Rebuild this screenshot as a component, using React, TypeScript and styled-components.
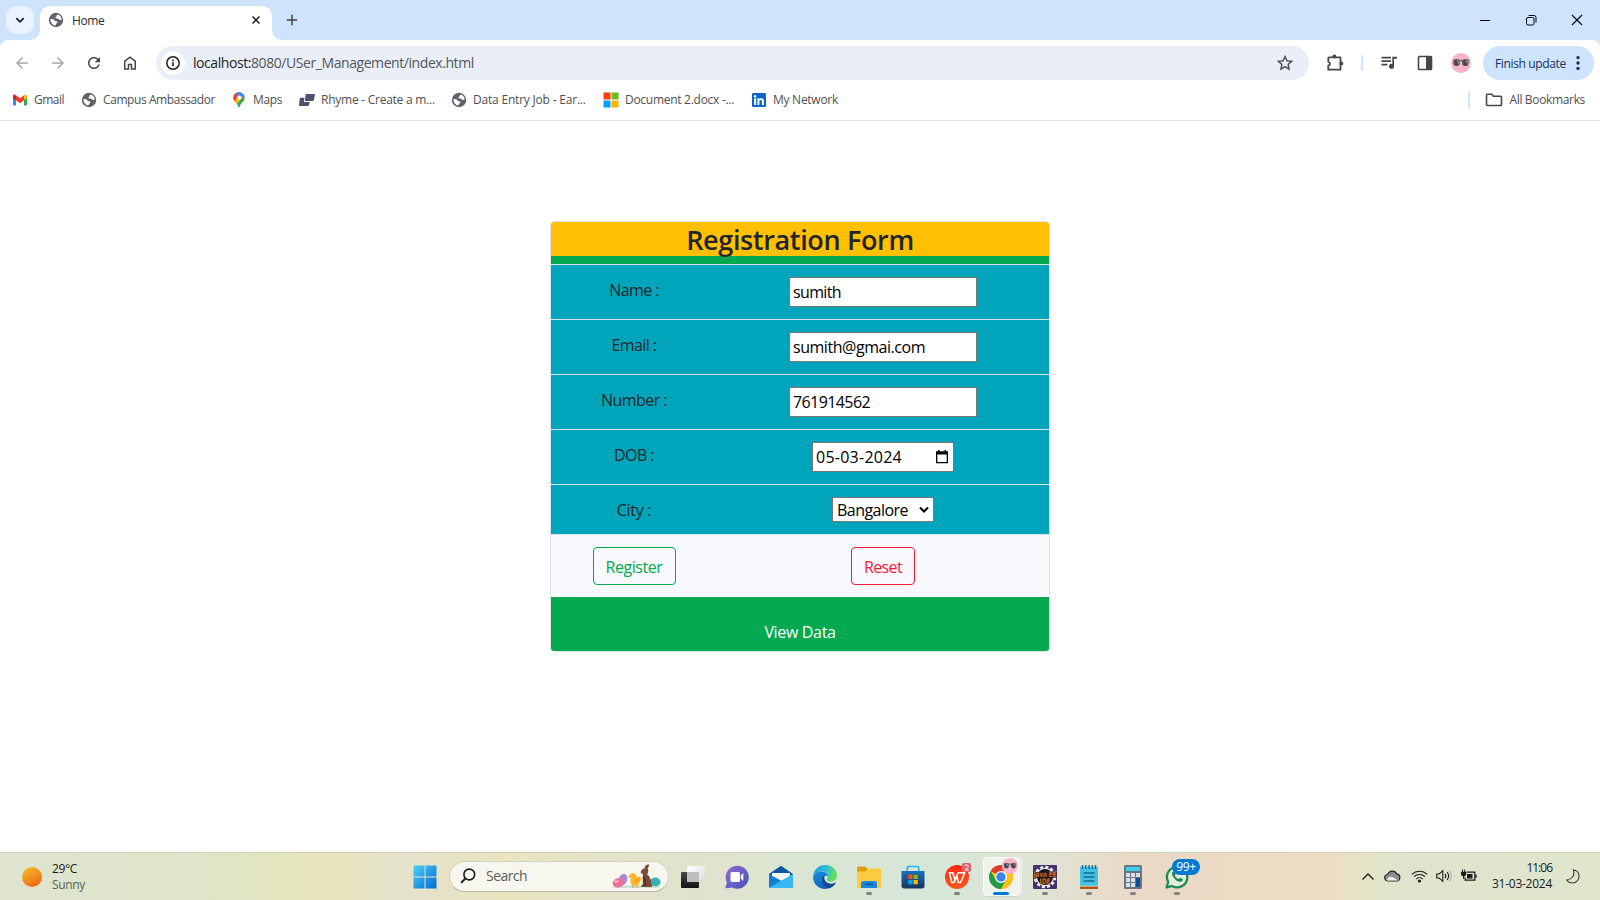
import React from 'react';
import styled, { createGlobalStyle } from 'styled-components';

const GlobalStyle = createGlobalStyle`
  * { box-sizing: border-box; }
  html, body { margin: 0; padding: 0; overflow: hidden; }
  body { font-family: "Open Sans", "Noto Sans", sans-serif; color: #212529; background: #fff; }
`;

/* ---------- shared ---------- */

const Screen = styled.div`
  width: 1600px;
  height: 900px;
  display: flex;
  flex-direction: column;
  overflow: hidden;
`;

const Label = styled.span<{ $track?: number }>`
  display: inline-block;
  white-space: nowrap;
  letter-spacing: ${(p) => p.$track ?? 0}px;
`;

const Glyph = styled.svg`
  display: block;
  flex: none;
  overflow: visible;
`;

/* ---------- tab strip ---------- */

const TabStrip = styled.header`
  height: 40px;
  flex: none;
  display: flex;
  align-items: flex-end;
  background: #cee3fc;
`;

const TabSearch = styled.button`
  width: 28px;
  height: 28px;
  margin: 0 6px 6px 6px;
  padding: 0;
  border: 0;
  border-radius: 10px;
  background: #e9f2fe;
  display: grid;
  place-items: center;
`;

const Tab = styled.div`
  position: relative;
  width: 232px;
  height: 34px;
  padding: 0 8px 6px 8px;
  border-radius: 10px 10px 0 0;
  background: #fff;
  display: flex;
  align-items: center;
  font-size: 12px;
  color: #2c2c2c;

  &::before,
  &::after {
    content: '';
    position: absolute;
    bottom: 0;
    width: 10px;
    height: 10px;
  }
  &::before {
    left: -10px;
    background: radial-gradient(circle at 0 0, transparent 9.5px, #fff 10px);
  }
  &::after {
    right: -10px;
    background: radial-gradient(circle at 100% 0, transparent 9.5px, #fff 10px);
  }
`;

const TabTitle = styled(Label)`
  flex: 1;
  margin-left: 8px;
`;

const NewTab = styled.div`
  height: 40px;
  margin-left: 10px;
  width: 20px;
  display: grid;
  place-items: center;
`;

const WindowControls = styled.div`
  height: 40px;
  margin-left: auto;
  display: flex;
`;

const WindowButton = styled.div`
  width: 46px;
  height: 40px;
  display: grid;
  place-items: center;
`;

/* ---------- toolbar ---------- */

const ToolbarBack = styled.div`
  flex: none;
  background: #cee3fc;
`;

const Toolbar = styled.div`
  height: 46px;
  padding: 6px 6px 6px 4px;
  border-radius: 8px 8px 0 0;
  background: #fff;
  display: flex;
  align-items: center;
`;

const ToolButton = styled.div`
  width: 36px;
  height: 34px;
  flex: none;
  display: grid;
  place-items: center;
  color: #474747;
`;

const Omnibox = styled.div`
  flex: 1;
  height: 34px;
  margin: 0 8px;
  padding: 0 14px 0 5px;
  border-radius: 17px;
  background: #e9eef8;
  display: flex;
  align-items: center;
  font-size: 14px;
  color: #55575b;
`;

const SiteInfo = styled.div`
  width: 24px;
  height: 24px;
  border-radius: 50%;
  background: #fff;
  display: grid;
  place-items: center;
`;

const Url = styled(Label)`
  flex: 1;
  margin: -1px 0 0 8px;
`;

const Host = styled.span`
  color: #1f1f1f;
`;

const Divider = styled.div<{ $gap: string }>`
  width: 2px;
  height: 16px;
  margin: ${(p) => p.$gap};
  border-radius: 1px;
  background: #cee3fc;
`;

const UpdateChip = styled.div`
  width: 111px;
  height: 34px;
  margin-left: 4px;
  padding: 0 9px 0 12px;
  border-radius: 17px;
  background: #cee3fc;
  display: flex;
  align-items: center;
  justify-content: space-between;
  font-size: 12px;
  color: #16325c;
`;

/* ---------- bookmarks ---------- */

const BookmarkBar = styled.nav`
  height: 35px;
  flex: none;
  padding: 0 15px 6px 12px;
  border-bottom: 1px solid #dfdfdf;
  background: #fff;
  display: flex;
  align-items: center;
  font-size: 12px;
  color: #505050;
`;

const Bookmark = styled.div<{ $width?: number }>`
  width: ${(p) => (p.$width ? `${p.$width}px` : 'auto')};
  display: flex;
  align-items: center;
  gap: 6px;
  height: 28px;

  & > ${Label} {
    margin-top: -1px;
  }
`;

const AllBookmarks = styled.div`
  margin-left: auto;
  display: flex;
  align-items: center;
`;

/* ---------- registration page ---------- */

const Page = styled.main`
  flex: 1;
  min-height: 0;
  background: #fff;
  display: flex;
  justify-content: center;
  align-items: flex-start;
  padding-top: 100px;
`;

const Card = styled.form`
  width: 500px;
  border: 1px solid #dee2e6;
  border-radius: 4px;
  overflow: hidden;
  font-size: 16px;
  line-height: 24px;
`;

const Title = styled.h2`
  margin: 0;
  height: 34px;
  background: #ffc002;
  font-size: 27px;
  font-weight: 600;
  line-height: 36px;
  text-align: center;
`;

const TitleRule = styled.div`
  height: 8px;
  background: #02a94e;
`;

const FieldRow = styled.div<{ $tone?: 'light' }>`
  display: grid;
  grid-template-columns: 166px 1fr;
  border-top: 1px solid #dee2e6;
  background: ${(p) => (p.$tone === 'light' ? '#f8f9fc' : '#01a5bb')};
`;

const Cell = styled.div`
  padding: 12px;
  display: flex;
  justify-content: center;
  align-items: flex-start;
`;

const FieldName = styled(Label)`
  padding-top: 1px;
  margin-bottom: -1px;
`;

const Field = styled.div<{ $width: number; $height?: number }>`
  width: ${(p) => p.$width}px;
  height: ${(p) => p.$height ?? 30}px;
  padding: 0 3px;
  border: 1px solid #767676;
  background: #fff;
  color: #000;
  display: flex;
  align-items: center;
  justify-content: space-between;
`;

const CityField = styled(Field)`
  padding-left: 4px;
`;

const ActionButton = styled.button<{ $color: string; $width: number }>`
  width: ${(p) => p.$width}px;
  height: 38px;
  padding: 1px 0 0;
  border: 1px solid ${(p) => p.$color};
  border-radius: 4px;
  background: transparent;
  color: ${(p) => p.$color};
  font: inherit;
`;

const CardFooter = styled.div`
  height: 54px;
  padding-top: 23px;
  background: #02a94e;
  color: #fff;
  text-align: center;
`;

/* ---------- taskbar ---------- */

const Taskbar = styled.footer`
  height: 48px;
  flex: none;
  border-top: 1px solid #cdcfba;
  background: linear-gradient(90deg, #dee4d0 0, #dee5c8 200px, #e2e5be 275px, #ebe5bf 335px, #e4e3cb 395px,
    #e6e2c7 440px, #eae4c0 510px, #e3e4cb 620px, #e1e2cc 700px, #dbe6d2 780px, #d6e7d8 930px, #dfe5d6 1030px,
    #ead9c6 1140px, #efdcc3 1320px, #e6e2c6 1360px, #dee5cc 1400px, #dfe6cc 1600px);
  display: grid;
  grid-template-columns: 402px auto 1fr;
`;

const Weather = styled.div`
  padding-left: 22px;
  display: flex;
  align-items: center;
  gap: 10px;
  font-size: 12px;
  line-height: 16px;
`;

const WeatherText = styled.div`
  display: flex;
  flex-direction: column;
  color: #1b1b1b;
`;

const Muted = styled(Label)`
  color: #5b5f55;
`;

const Apps = styled.div`
  display: flex;
  align-items: center;
`;

const SearchPill = styled.div`
  width: 220px;
  height: 31px;
  margin: 0 2px 1px 3px;
  padding: 0 5px 0 10px;
  border: 1px solid #d3d2be;
  border-bottom-color: #b9b9a4;
  border-radius: 16px;
  background: #f7f6ef;
  display: flex;
  align-items: center;
  font-size: 14px;
  color: #5e5e5a;
`;

const SearchText = styled(Label)`
  flex: 1;
  margin: -1px 0 0 10px;
`;

const AppSlot = styled.div<{ $open?: boolean; $active?: boolean }>`
  position: relative;
  width: 44px;
  height: 47px;
  display: grid;
  place-items: center;

  &::after {
    content: '';
    display: ${(p) => (p.$open || p.$active ? 'block' : 'none')};
    position: absolute;
    bottom: 5px;
    left: 50%;
    transform: translateX(-50%);
    width: ${(p) => (p.$active ? 16 : 6)}px;
    height: 3px;
    border-radius: 2px;
    background: ${(p) => (p.$active ? '#0078d4' : '#808479')};
  }
`;

const StartSlot = styled(AppSlot)`
  padding-left: 1px;
`;

const ActivePlate = styled.div`
  position: relative;
  width: 36px;
  height: 39px;
  border-radius: 4px;
  border: 1px solid rgba(255, 255, 255, 0.75);
  background: rgba(255, 255, 255, 0.55);
  display: grid;
  place-items: center;
  box-shadow: 3px 0 0 rgba(255, 255, 255, 0.4), 0 1px 1px rgba(0, 0, 0, 0.08);
`;

const AvatarBadge = styled.div`
  position: absolute;
  top: 0;
  right: 0;
`;

const CountBadge = styled.div`
  position: absolute;
  top: 6px;
  left: 17px;
  width: 28px;
  height: 16px;
  border-radius: 8px;
  background: #0078d4;
  color: #fff;
  font-size: 12px;
  line-height: 16px;
  text-align: center;
`;

const Tray = styled.div`
  display: flex;
  align-items: center;
  justify-content: flex-end;
  padding-right: 20px;
  color: #1b1b1b;
`;

const TrayIcons = styled.div`
  display: flex;
  align-items: center;
  margin: 0 8px 2px 0;
`;

const TrayIcon = styled.div<{ $width: number }>`
  width: ${(p) => p.$width}px;
  height: 20px;
  display: grid;
  place-items: center;
`;

const Clock = styled.div`
  display: flex;
  flex-direction: column;
  align-items: flex-end;
  font-size: 12px;
  line-height: 16px;
  margin: 0 14px 1px 0;
`;

/* ---------- icons ---------- */

const Material = ({ d, size = 20, color = '#474747' }: { d: string; size?: number; color?: string }) => (
  <Glyph width={size} height={size} viewBox="0 0 24 24" fill={color}>
    <path d={d} />
  </Glyph>
);

const Globe = () => (
  <Glyph width="16" height="16" viewBox="0 0 16 16">
    <circle cx="8" cy="8" r="7.2" fill="#5f6368" />
    <path
      d="M2.4 7.1C3.8 6.9 5.2 7 6 7.7c.8.7.7 1.6 1.8 1.6 1 0 1.6.2 1.6 1 0 1-1 1-1.4 1.8-.3.7-.2 1.3-.9 1.4C4.500 13 2.300 10.600 2.400 7.100z"
      fill="#fff"
    />
    <path
      d="M9 2.500c2.600.4 4.400 2.300 4.700 4.700-.7.9-1.500 1-2.300.6-.8-.5-.9-1.200-2-1.200-1 0-2-.2-2-1.200 0-.9 1.100-.8 1.400-1.500.2-.5 0-.9.2-1.400z"
      fill="#fff"
    />
  </Glyph>
);

const GmailLogo = () => (
  <Glyph width="16" height="16" viewBox="0 0 16 16">
    <path d="M1 4.500v8.100c0 .5.400.9.900.9H4V7.200z" fill="#4285f4" />
    <path d="M15 4.500v8.100c0 .5-.4.9-.9.9H12V7.200z" fill="#34a853" />
    <path d="M12 4.300v4l3-2.300V4.200c0-1.400-1.500-2-2.500-1.300z" fill="#fbbc04" />
    <path d="M1 4.200V6l3 2.300v-4l-.5-1.400C2.500 2.200 1 2.800 1 4.200z" fill="#c5221f" />
    <path d="M4 8.300V4L3.500 2.900 8 6.200l4.500-3.300L12 4v4.300l-4 3z" fill="#f23a2b" />
  </Glyph>
);

const MapsPin = () => (
  <Glyph width="16" height="16" viewBox="0 0 16 16">
    <defs>
      <clipPath id="pin">
        <path d="M8 .2a5.600 5.600 0 0 0-5.600 5.600c0 3.900 3.800 4.600 4.900 8.900.2 1 1.200 1 1.400 0 1.100-4.300 4.900-5 4.900-8.900A5.600 5.600 0 0 0 8 .2z" />
      </clipPath>
    </defs>
    <g clipPath="url(#pin)">
      <path d="M0 0h16v16H0z" fill="#34a853" />
      <path d="M0 0h9L8 6 3 11H0z" fill="#ea4335" />
      <path d="M4 0h12v4L9 7z" fill="#4285f4" />
      <path d="M2 10.500 8 4l4 1-6 7z" fill="#fbbc04" />
    </g>
    <circle cx="8" cy="5.700" r="2.100" fill="#fff" />
  </Glyph>
);

const RhymeLogo = () => (
  <Glyph width="16" height="16" viewBox="0 0 16 16" fill="#50506f">
    <path d="M7.600 2H16l-.9 5.200c-.2 1.200-.9 1.800-2.100 1.800H6l.4-5.600c.1-.9.500-1.400 1.200-1.400z" />
    <path d="M2 5.800h3.400l-.4 4.200h5.800l-.6 2.600c-.2 1-.8 1.400-1.700 1.400H0l.6-6.800C.7 6.200 1.200 5.800 2 5.800z" />
  </Glyph>
);

const WindowsTiles = () => (
  <Glyph width="16" height="16" viewBox="0 0 16 16">
    <path d="M.500.500h7v7h-7z" fill="#ff3c00" />
    <path d="M8.500.500h7v7h-7z" fill="#6abd1d" />
    <path d="M.500 8.500h7v7h-7z" fill="#00a2f2" />
    <path d="M8.500 8.500h7v7h-7z" fill="#ffb400" />
  </Glyph>
);

const LinkedIn = () => (
  <Glyph width="16" height="16" viewBox="0 0 16 16">
    <rect x="1" y="1" width="14" height="14" rx="1.200" fill="#0a66c2" />
    <path d="M3.100 6.300h2v6.600h-2zM6.400 6.300h1.900v.9c.9-1.600 4.600-1.500 4.600 1.700v4h-2V9.500c0-2.100-2.500-1.900-2.500 0v3.400h-2z" fill="#fff" />
    <circle cx="4.100" cy="4.200" r="1.200" fill="#fff" />
  </Glyph>
);

const Folder = () => (
  <Glyph width="18" height="16" viewBox="0 0 18 16" fill="none" stroke="#474747" strokeWidth="1.600" strokeLinejoin="round">
    <path d="M1.500 3.200c0-.5.400-.9.900-.9h4.400l1.600 1.900h7.200c.5 0 .9.400.9.900v7.500c0 .5-.4.900-.9.900H2.400c-.5 0-.9-.4-.9-.9z" />
  </Glyph>
);

const GlassesAvatar = ({ size }: { size: number }) => (
  <Glyph width={size} height={size} viewBox="0 0 20 20">
    <circle cx="10" cy="10" r="10" fill="#fbb2cb" />
    <path d="M1.500 7.200c2-1.500 5-1.600 7.300-.6.800.3 1.600.3 2.400 0 2.300-1 5.300-.9 7.300.6l-.9 1.500H2.400z" fill="#8d7a7d" />
    <circle cx="5.600" cy="9.800" r="3.200" fill="#4a4a4c" />
    <circle cx="14.400" cy="9.800" r="3.200" fill="#4a4a4c" />
    <path d="M5.600 7.300a2.500 2.500 0 0 1 2.200 3.700zM14.400 7.300a2.500 2.500 0 0 1 2.200 3.700z" fill="#a8a8aa" />
  </Glyph>
);

const CalendarGlyph = () => (
  <Glyph width="15" height="16" viewBox="0 0 15 16">
    <path d="M1.650 3.200h10.700v10.500H1.650z" fill="none" stroke="#000" strokeWidth="1.300" />
    <path d="M1 2.600h12v3H1zM3 1h1.500v2H3zM9.500 1H11v2H9.500z" />
  </Glyph>
);

const SelectArrow = () => (
  <Glyph width="12" height="12" viewBox="0 0 12 12" fill="none" stroke="#000" strokeWidth="2">
    <path d="m2 3.500 4 4 4-4" />
  </Glyph>
);

const SunIcon = () => (
  <Glyph width="20" height="20" viewBox="0 0 20 20">
    <defs>
      <linearGradient id="sun" x1=".2" y1=".05" x2=".75" y2="1">
        <stop offset="0" stopColor="#f2b92f" />
        <stop offset="1" stopColor="#f3640b" />
      </linearGradient>
    </defs>
    <circle cx="10" cy="10" r="10" fill="url(#sun)" />
  </Glyph>
);

const StartIcon = () => (
  <Glyph width="24" height="24" viewBox="0 0 24 24">
    <defs>
      <linearGradient id="start" x1="0" y1="0" x2="1" y2="1">
        <stop offset="0" stopColor="#4fd0fb" />
        <stop offset="1" stopColor="#0069d0" />
      </linearGradient>
    </defs>
    <path d="M.500.500h11v11h-11zM12.500.500h11v11h-11zM.500 12.500h11v11h-11zM12.500 12.500h11v11h-11z" fill="url(#start)" />
  </Glyph>
);

const SearchGlyph = () => (
  <Glyph width="16" height="16" viewBox="0 0 16 16" fill="none" stroke="#1d1d1d" strokeWidth="1.600">
    <circle cx="9.300" cy="6.500" r="5.400" />
    <path d="m5.300 10.500-4.200 4.400" strokeWidth="2" />
  </Glyph>
);

const EasterArt = () => (
  <Glyph width="52" height="26" viewBox="0 -1 52 26">
    <path d="M0 24c8-4 44-4 50-2l-3 2z" fill="#c9e6d3" />
    <ellipse cx="12" cy="15.500" rx="4.300" ry="5.700" fill="#a98ad0" transform="rotate(20 12 15)" />
    <ellipse cx="7.500" cy="18.700" rx="5.900" ry="4.600" fill="#ea6f9c" transform="rotate(-12 8 19)" />
    <ellipse cx="5.500" cy="17.300" rx="2.600" ry="1.600" fill="#f6a6bf" />
    <ellipse cx="44.300" cy="17.800" rx="5.300" ry="4.400" fill="#36b3b3" />
    <path d="M18.500 11.500c.5-2.200 3.600-3.500 5.900-1.400 1.200 1.100.8 2.600 2.300 2.800 1 .1 2-.7 2.500-.3 1.300 1.300.8 7-2.800 8.600-2.700 1.200-6.500 0-6.900-3-.2-1.900.600-3 0-4.300z" fill="#fbb62b" />
    <path d="m18.700 11.800-2.200.9 2.300.9zM21.500 21v2.500h2M25.500 21v2.500h2" fill="#f08418" />
    <path d="M24.500 14.300c2 1.300 3 .5 4-.3 0 3-2.500 4.800-4.500 3.700z" fill="#f49b1c" />
    <path d="M29.700 8c.5-2 2-3.500 4-3.600C33.300 2.500 35 .200 38 .400c0 1.600-.5 3-1.500 4.200 1.500 1.700.8 4.200-.4 5.600 3 2.400 4.500 6.200 4.100 9.500.8.700 1.300 2.200.7 3.300H30.500c-.6-1 .1-2.100 1.200-2.500.7-3.400-.8-6.200.4-10.400-1.300-.2-2.400-1-2.400-2.100z" fill="#7b4a38" />
    <path d="M32.300 11c-.6 4 .8 7 .4 10.200l2 1.200c1-3 .6-5.800-.2-7.700z" fill="#5d3428" />
  </Glyph>
);

const TaskViewIcon = () => (
  <Glyph width="24" height="24" viewBox="0 0 24 24">
    <defs>
      <linearGradient id="tvd" x1="0" y1="0" x2="0" y2="1">
        <stop offset="0" stopColor="#484846" />
        <stop offset="1" stopColor="#121212" />
      </linearGradient>
      <linearGradient id="tvl" x1="0" y1="0" x2="1" y2="1">
        <stop offset="0" stopColor="#fff" />
        <stop offset="1" stopColor="#dcdcdc" />
      </linearGradient>
    </defs>
    <rect x="0" y="7" width="18" height="16" rx="1" fill="url(#tvd)" />
    <rect x="6" y="1" width="18" height="16" rx="1" fill="url(#tvl)" />
    <path d="M6 7h12v10H7a1 1 0 0 1-1-1z" fill="#bdbdbb" />
  </Glyph>
);

const ChatIcon = () => (
  <Glyph width="24" height="24" viewBox="0 0 24 24">
    <defs>
      <linearGradient id="chat" x1="0" y1="0" x2="1" y2="1">
        <stop offset="0" stopColor="#9b62c9" />
        <stop offset=".5" stopColor="#6563c8" />
        <stop offset="1" stopColor="#4c52b4" />
      </linearGradient>
    </defs>
    <path d="M12 .7a11.500 11.500 0 1 1-5 21.700L1.300 23.300c-.7.100-1-.4-.8-1l1.400-4.900A11.500 11.500 0 0 1 12 .7z" fill="url(#chat)" />
    <rect x="5.500" y="7" width="9.500" height="10" rx="1.500" fill="#fff" />
    <path d="m15.800 10.500 2.500-2.400v7.800l-2.500-2.400z" fill="#fff" />
  </Glyph>
);

const MailIcon = () => (
  <Glyph width="24" height="24" viewBox="0 0 24 24">
    <path d="M0 9 12 .8 24 9v3H0z" fill="#0b57a6" />
    <path d="M3 8h18v6l-9 6-9-6z" fill="#f4f6f8" />
    <path d="M0 9.300 12 17l12-7.700V22a1 1 0 0 1-1 1H1a1 1 0 0 1-1-1z" fill="#1e95e0" />
    <path d="M24 9.300 0 22.500a1 1 0 0 0 1 .5h22a1 1 0 0 0 1-1z" fill="#36b8f4" />
    <path d="M0 9.300V22.500L12.500 15.800z" fill="#1580d2" />
  </Glyph>
);

const EdgeIcon = () => (
  <Glyph width="24" height="24" viewBox="0 0 24 24">
    <defs>
      <linearGradient id="ed1" x1="0" y1="0" x2="1" y2=".3">
        <stop offset="0" stopColor="#2090d8" />
        <stop offset=".55" stopColor="#2bbfd5" />
        <stop offset="1" stopColor="#67de5c" />
      </linearGradient>
      <linearGradient id="ed2" x1="0" y1="0" x2=".6" y2="1">
        <stop offset="0" stopColor="#1790de" />
        <stop offset="1" stopColor="#0f60b8" />
      </linearGradient>
    </defs>
    <path d="M.2 10.600C1 4.500 6 0 12 0c7 0 12 4.800 12 10.300 0 4-3 6.300-6.300 6.300-2.700 0-3.900-.9-3.900-1.900 0-.8 1.100-1.100 1.100-3.100C14.900 8.500 11.800 6.600 8 6.600c-4 0-6.800 1.800-7.800 4z" fill="url(#ed1)" />
    <path d="M.1 12.500C0 9 4 6.300 8 6.600c3.900.2 6.500 2 6.900 4.700-3-1.800-6.400.4-6.400 4.200 0 4.400 3.300 7.200 6.600 8.100C7.200 25.500.3 20 .1 12.500z" fill="url(#ed2)" />
    <path d="M8.500 15.200c0-2.600 1.400-4.300 3.500-4.600-.8 1.300-.8 2.700-.4 4 1 3.500 6.200 5.500 10.600 2.900.5-.2.800.2.500.7-2 3.200-5 5-7.600 5.400-3.600-.8-6.600-4-6.600-8.400z" fill="#0c4a92" />
  </Glyph>
);

const ExplorerIcon = () => (
  <Glyph width="24" height="24" viewBox="0 0 24 24">
    <path d="M0 3c0-.9.600-1.500 1.500-1.500h6.800L11 4v4H0z" fill="#dd9c14" />
    <path d="M0 6.500h8.500L11 3.600h12c.6 0 1 .4 1 1V22c0 .6-.4 1-1 1H1c-.6 0-1-.4-1-1z" fill="#fdcb3f" />
    <path d="M4 23v-4.500c0-1.500.9-2.500 2.400-2.500h11.200c1.500 0 2.400 1 2.400 2.500V23z" fill="#1a86dc" />
    <rect x="7.500" y="18.600" width="9" height="1.700" rx=".8" fill="#0d57a4" />
  </Glyph>
);

const StoreIcon = () => (
  <Glyph width="24" height="24" viewBox="0 0 24 24">
    <defs>
      <linearGradient id="store" x1="0" y1="0" x2="0" y2="1">
        <stop offset="0" stopColor="#1c70b8" />
        <stop offset="1" stopColor="#17335f" />
      </linearGradient>
    </defs>
    <path d="M6.300 7V2.800c0-.8.500-1.300 1.300-1.300h8.800c.8 0 1.300.5 1.300 1.300V7" fill="none" stroke="#25b4ee" strokeWidth="1.700" />
    <path d="M.500 6h23v15c0 1.500-1 2.500-2.500 2.500H3C1.500 23.500.5 22.500.5 21z" fill="url(#store)" />
    <path d="M7.200 9.700h4.300V14H7.200z" fill="#f25022" />
    <path d="M12.500 9.700h4.300V14h-4.300z" fill="#7fba00" />
    <path d="M7.200 15h4.300v4.300H7.200z" fill="#00a4ef" />
    <path d="M12.500 15h4.300v4.300h-4.300z" fill="#ffb900" />
  </Glyph>
);

const WpsIcon = () => (
  <Glyph width="26" height="26" viewBox="0 0 26 26">
    <defs>
      <linearGradient id="wps" x1="0" y1="0" x2="0" y2="1">
        <stop offset="0" stopColor="#ff2414" />
        <stop offset="1" stopColor="#fb5a1e" />
      </linearGradient>
    </defs>
    <circle cx="13" cy="13" r="12" fill="url(#wps)" />
    <path
      d="M5.300 8.700h3.600l2.100 7.300 3-7.300h6.800l-4.200 9.800h-2.300L12.800 12l-2.700 6.500H7.900L5.300 8.700z"
      fill="none"
      stroke="#fff"
      strokeWidth="1.600"
      strokeLinejoin="round"
    />
    <rect x="18" y="-1" width="9" height="9" rx="2" fill="#e2616a" />
    <path d="M20.300 1.500c1.500-1.300 4.300-.6 4 1.300-.2 1.500-2.300 1.300-3 3.200h3.300" fill="none" stroke="#fff" strokeWidth="1" />
  </Glyph>
);

const ChromeIcon = () => (
  <Glyph width="24" height="24" viewBox="0 0 24 24">
    <circle cx="12" cy="12" r="12" fill="#fbc116" />
    <path d="M12 12 1.610 6A12 12 0 0 1 22.390 6z" fill="#e33b2e" />
    <path d="M1.610 6A12 12 0 0 0 12 24l5.200-9L12 12 6.800 15z" fill="#229a4c" />
    <path d="M12 6h10.390A12 12 0 0 1 12 24l5.200-9z" fill="#fbc116" />
    <circle cx="12" cy="12" r="6" fill="#fff" />
    <circle cx="12" cy="12" r="4.700" fill="#3f83ee" />
  </Glyph>
);

const JavaText = styled.text`
  font-family: 'DejaVu Sans', sans-serif;
  font-weight: 700;
  font-size: 7.5px;
  fill: #f28a1c;
  stroke: #3a1d10;
  stroke-width: 0.3px;
`;

const JavaIcon = () => (
  <Glyph width="24" height="24" viewBox="0 0 24 24">
    <rect width="24" height="24" rx="1" fill="#46306e" />
    <circle cx="12" cy="12" r="9.800" fill="none" stroke="#ededf2" strokeWidth="3" strokeDasharray="3 2.130" />
    <circle cx="12" cy="12" r="8.600" fill="#1c1420" stroke="#e8e6ee" strokeWidth="1.200" />
    <path d="M0 7h24v6H0z" fill="#2b1b28" opacity=".7" />
    <JavaText x="0.500" y="12" textLength="23" lengthAdjust="spacingAndGlyphs">Java EE</JavaText>
    <JavaText x="6.500" y="18.600" textLength="11" lengthAdjust="spacingAndGlyphs">IDE</JavaText>
  </Glyph>
);

const NotepadIcon = () => (
  <Glyph width="24" height="24" viewBox="0 0 24 24">
    <path d="M3 21h18v2a1 1 0 0 1-1 1H4a1 1 0 0 1-1-1z" fill="#b5520f" />
    <path d="M3 20.500h18v1H3z" fill="#f3f3f3" />
    <rect x="3" y="1.800" width="18" height="19" rx="1" fill="#44c0e2" />
    <path d="M6.500 8h11M6.500 12h11M6.500 16h11" stroke="#0e6d90" strokeWidth="1.700" />
    <path d="M5.500 0v4M8.700 0v4M12 0v4M15.300 0v4M18.500 0v4" stroke="#176f92" strokeWidth="1.400" />
  </Glyph>
);

const CalculatorIcon = () => (
  <Glyph width="24" height="24" viewBox="0 0 24 24">
    <rect x="3" y="0" width="18" height="24" rx="1.500" fill="#6b7683" />
    <rect x="5" y="2" width="14" height="4" fill="#3ccdf2" />
    <path d="M5 8h4v4H5zM10 8h4v4h-4zM15 8h4v4h-4zM5 13h4v4H5zM10 13h4v4h-4zM5 18h4v4H5zM10 18h4v4h-4z" fill="#d9dde1" />
    <path d="M15 13h4v9h-4z" fill="#0d4f94" />
  </Glyph>
);

const WhatsAppIcon = () => (
  <Glyph width="24" height="24" viewBox="0 0 24 24">
    <path d="M1.600 22.500 3.200 17A10.200 10.200 0 1 1 7 20.900z" fill="#e6efdf" stroke="#1c8a50" strokeWidth="2.300" strokeLinejoin="round" />
    <path d="M8.200 6.500c-1.800 1-1.600 3.300.3 6 2.200 3 5.300 4.900 7.600 4.200 1.500-.5 1.900-1.800 1.700-2.600l-2.800-1.400-1.400 1.500c-1.700-.7-3-2-3.800-3.600l1-1.400L9.600 6.500z" fill="#1c8a50" />
  </Glyph>
);

/* ---------- data ---------- */

const bookmarks = [
  { text: 'Gmail', track: -0.5, width: 69, icon: <GmailLogo /> },
  { text: 'Campus Ambassador', track: -0.42, width: 150, icon: <Globe /> },
  { text: 'Maps', track: -0.38, width: 68, icon: <MapsPin /> },
  { text: 'Rhyme - Create a m...', track: -0.25, width: 152, icon: <RhymeLogo /> },
  { text: 'Data Entry Job - Ear...', track: -0.2, width: 152, icon: <Globe /> },
  { text: 'Document 2.docx -...', track: -0.28, width: 148, icon: <WindowsTiles /> },
  { text: 'My Network', track: -0.27, width: 0, icon: <LinkedIn /> },
];

const fields = [
  { label: 'Name :', track: -0.6, value: 'sumith', valueTrack: -0.63 },
  { label: 'Email :', track: -0.58, value: 'sumith@gmai.com', valueTrack: -0.46 },
  { label: 'Number :', track: -0.54, value: '761914562', valueTrack: -0.59 },
];

export default function App() {
  return (
    <Screen>
      <GlobalStyle />

      <TabStrip>
        <TabSearch>
          <Glyph width="10" height="10" viewBox="0 0 10 10" fill="none" stroke="#1f1f1f" strokeWidth="1.800">
            <path d="m1.300 3.200 3.700 3.600 3.700-3.600" />
          </Glyph>
        </TabSearch>
        <Tab>
          <Globe />
          <TabTitle $track={-0.4}>Home</TabTitle>
          <Glyph width="16" height="16" viewBox="0 0 16 16" stroke="#1f1f1f" strokeWidth="1.500">
            <path d="m4.500 4.500 7 7M11.500 4.500l-7 7" />
          </Glyph>
        </Tab>
        <NewTab>
          <Glyph width="12" height="12" viewBox="0 0 12 12" stroke="#474747" strokeWidth="1.500">
            <path d="M6 .8v10.400M.8 6h10.400" />
          </Glyph>
        </NewTab>
        <WindowControls>
          <WindowButton>
            <Glyph width="10" height="10" viewBox="0 0 10 10" stroke="#000" strokeWidth="1">
              <path d="M0 5.500h10" />
            </Glyph>
          </WindowButton>
          <WindowButton>
            <Glyph width="10" height="10" viewBox="0 0 10 10" stroke="#000" strokeWidth="1" fill="none">
              <rect x=".500" y="2.500" width="7.500" height="7.500" rx="1.500" />
              <path d="M2.700.500H8A2 2 0 0 1 10 2.500v5" />
            </Glyph>
          </WindowButton>
          <WindowButton>
            <Glyph width="10" height="10" viewBox="0 0 10 10" stroke="#000" strokeWidth="1.100">
              <path d="m0 0 10 10M10 0 0 10" />
            </Glyph>
          </WindowButton>
        </WindowControls>
      </TabStrip>

      <ToolbarBack>
        <Toolbar>
          <ToolButton>
            <Material color="#a9a9a9" size={18} d="M20 11H7.830l5.590-5.590L12 4l-8 8 8 8 1.410-1.410L7.830 13H20v-2z" />
          </ToolButton>
          <ToolButton>
            <Material color="#a9a9a9" size={18} d="M4 11h12.170l-5.590-5.590L12 4l8 8-8 8-1.410-1.410L16.170 13H4v-2z" />
          </ToolButton>
          <ToolButton>
            <Material size={18} d="M17.650 6.350C16.200 4.900 14.210 4 12 4c-4.420 0-7.990 3.580-7.990 8s3.570 8 7.990 8c3.730 0 6.840-2.550 7.730-6h-2.080c-.82 2.330-3.040 4-5.650 4-3.310 0-6-2.690-6-6s2.690-6 6-6c1.660 0 3.140.69 4.220 1.780L13 11h7V4l-2.350 2.350z" />
          </ToolButton>
          <ToolButton>
            <Material size={18} d="M6 19h3v-6h6v6h3v-9l-6-4.500L6 10v9zm-2 2V9l8-6 8 6v12h-7v-6h-2v6H4z" />
          </ToolButton>
          <Omnibox>
            <SiteInfo>
              <Glyph width="16" height="16" viewBox="0 0 16 16">
                <circle cx="8" cy="8" r="6.200" fill="none" stroke="#1f1f1f" strokeWidth="1.500" />
                <path d="M7.200 7.200h1.600v4H7.200zM7.200 4.600h1.600v1.600H7.200z" fill="#1f1f1f" />
              </Glyph>
            </SiteInfo>
            <Url $track={-0.43}>
              <Host>localhost:</Host>8080/USer_Management/index.html
            </Url>
            <Material size={20} d="M22 9.240l-7.190-.62L12 2 9.190 8.630 2 9.240l5.460 4.730L5.820 21 12 17.270 18.180 21l-1.630-7.030L22 9.240zM12 15.400l-3.760 2.270 1-4.280-3.320-2.880 4.380-.38L12 6.100l1.710 4.040 4.380.38-3.320 2.880 1 4.280L12 15.400z" />
          </Omnibox>
          <ToolButton>
            <Glyph width="18" height="18" viewBox="0 0 18 18">
              <path d="M2.300 3.300h12.200v3.800M14.500 10.800v4.900H2.300v-4.200c2.200-.3 2.200-3.400 0-3.700V3.300M14.500 7v4" fill="none" stroke="#474747" strokeWidth="1.800" strokeLinejoin="round" />
              <circle cx="8.400" cy="2.400" r="1.900" fill="#474747" />
              <circle cx="15.400" cy="9.400" r="1.900" fill="#474747" />
            </Glyph>
          </ToolButton>
          <Divider $gap="0 8px 0 8px" />
          <ToolButton>
            <Glyph width="18" height="16" viewBox="0 0 18 16" fill="#474747">
              <path d="M1.500 1.700h9.500v1.800H1.500zM1.500 5.200h9.500v1.800H1.500zM1.500 8.700h5.800v1.800H1.500z" />
              <path d="M12.300 1.700h4.700v2h-3v7.500a2.500 2.500 0 1 1-1.700-2.300z" />
            </Glyph>
          </ToolButton>
          <ToolButton>
            <Glyph width="16" height="16" viewBox="0 0 16 16">
              <rect x="1.500" y="1.500" width="13" height="13" rx=".8" fill="none" stroke="#474747" strokeWidth="1.600" />
              <path d="M9 1h6v14H9z" fill="#474747" />
            </Glyph>
          </ToolButton>
          <ToolButton>
            <GlassesAvatar size={20} />
          </ToolButton>
          <UpdateChip>
            <Label $track={-0.36}>Finish update</Label>
            <Glyph width="14" height="16" viewBox="0 0 14 16" fill="#16325c">
              <circle cx="7" cy="2.600" r="1.700" />
              <circle cx="7" cy="8" r="1.700" />
              <circle cx="7" cy="13.400" r="1.700" />
            </Glyph>
          </UpdateChip>
        </Toolbar>
      </ToolbarBack>

      <BookmarkBar>
        {bookmarks.map((b) => (
          <Bookmark key={b.text} $width={b.width}>
            {b.icon}
            <Label $track={b.track}>{b.text}</Label>
          </Bookmark>
        ))}
        <AllBookmarks>
          <Divider $gap="0 15px 0 0" />
          <Bookmark>
            <Folder />
            <Label $track={-0.34}>All Bookmarks</Label>
          </Bookmark>
        </AllBookmarks>
      </BookmarkBar>

      <Page>
        <Card>
          <Title>
            <Label $track={-0.35}>Registration Form</Label>
          </Title>
          <TitleRule />
          {fields.map((f) => (
            <FieldRow key={f.label}>
              <Cell>
                <FieldName $track={f.track}>{f.label}</FieldName>
              </Cell>
              <Cell>
                <Field $width={188}>
                  <Label $track={f.valueTrack}>{f.value}</Label>
                </Field>
              </Cell>
            </FieldRow>
          ))}
          <FieldRow>
            <Cell>
              <FieldName $track={-0.55}>DOB :</FieldName>
            </Cell>
            <Cell>
              <Field $width={142}>
                <Label $track={0.25}>05-03-2024</Label>
                <CalendarGlyph />
              </Field>
            </Cell>
          </FieldRow>
          <FieldRow>
            <Cell>
              <FieldName $track={-0.3}>City :</FieldName>
            </Cell>
            <Cell>
              <CityField $width={102} $height={25}>
                <Label $track={-0.53}>Bangalore</Label>
                <SelectArrow />
              </CityField>
            </Cell>
          </FieldRow>
          <FieldRow $tone="light">
            <Cell>
              <ActionButton type="button" $color="#02a94e" $width={83}>
                <Label $track={-0.45}>Register</Label>
              </ActionButton>
            </Cell>
            <Cell>
              <ActionButton type="button" $color="#f31c38" $width={64}>
                <Label $track={-0.6}>Reset</Label>
              </ActionButton>
            </Cell>
          </FieldRow>
          <CardFooter>
            <Label $track={-0.34}>View Data</Label>
          </CardFooter>
        </Card>
      </Page>

      <Taskbar>
        <Weather>
          <SunIcon />
          <WeatherText>
            <Label $track={-0.35}>29°C</Label>
            <Muted $track={-0.33}>Sunny</Muted>
          </WeatherText>
        </Weather>
        <Apps>
          <StartSlot>
            <StartIcon />
          </StartSlot>
          <SearchPill>
            <SearchGlyph />
            <SearchText $track={-0.55}>Search</SearchText>
            <EasterArt />
          </SearchPill>
          <AppSlot><TaskViewIcon /></AppSlot>
          <AppSlot><ChatIcon /></AppSlot>
          <AppSlot><MailIcon /></AppSlot>
          <AppSlot><EdgeIcon /></AppSlot>
          <AppSlot $open><ExplorerIcon /></AppSlot>
          <AppSlot><StoreIcon /></AppSlot>
          <AppSlot $open><WpsIcon /></AppSlot>
          <AppSlot $active>
            <ActivePlate>
              <ChromeIcon />
              <AvatarBadge>
                <GlassesAvatar size={16} />
              </AvatarBadge>
            </ActivePlate>
          </AppSlot>
          <AppSlot $open><JavaIcon /></AppSlot>
          <AppSlot $open><NotepadIcon /></AppSlot>
          <AppSlot $open><CalculatorIcon /></AppSlot>
          <AppSlot $open>
            <WhatsAppIcon />
            <CountBadge>
              <Label $track={-0.3}>99+</Label>
            </CountBadge>
          </AppSlot>
        </Apps>
        <Tray>
          <TrayIcons>
            <TrayIcon $width={24}>
              <Glyph width="12" height="12" viewBox="0 0 12 12" fill="none" stroke="#1b1b1b" strokeWidth="1.300">
                <path d="m.500 9.500 5.500-5.500 5.500 5.500" />
              </Glyph>
            </TrayIcon>
            <TrayIcon $width={26}>
              <Glyph width="17" height="16" viewBox="0 0 17 16">
                <path d="M4.200 13a3.400 3.400 0 0 1-.4-6.800 4.900 4.900 0 0 1 9-.3A3.600 3.600 0 0 1 13 13z" fill="#8d8d8b" stroke="#2a2a2a" strokeWidth="1.100" />
                <path d="M2.600 12c1-2.200 3.400-4 5.700-3l5.900 3.200c-.4.300-.8.300-1.200.3H4.200c-.6 0-1.100-.1-1.600-.5z" fill="#f0f0ee" />
              </Glyph>
            </TrayIcon>
            <TrayIcon $width={28}>
              <Glyph width="17" height="16" viewBox="0 0 17 16" fill="none" stroke="#1b1b1b" strokeWidth="1.100">
                <path d="M.8 6.400a10.900 10.900 0 0 1 15.400 0M3.100 8.700a7.600 7.600 0 0 1 10.800 0M5.400 11a4.400 4.400 0 0 1 6.200 0" />
                <circle cx="8.500" cy="13" r="1" fill="#1b1b1b" />
              </Glyph>
            </TrayIcon>
            <TrayIcon $width={20}>
              <Glyph width="16" height="16" viewBox="0 0 16 16" fill="none" stroke="#1b1b1b" strokeWidth="1.100">
                <path d="M.800 6h2.400l3.600-3.300v10.600L3.200 10H.8z" />
                <path d="M9 5.800c1 1.300 1 3.100 0 4.400M11 4c2 2.400 2 5.600 0 8" />
                <path d="M13.200 2.500c2.800 3.300 2.800 7.700 0 11" stroke="#a9ad9c" />
              </Glyph>
            </TrayIcon>
            <TrayIcon $width={30}>
              <Glyph width="16" height="14" viewBox="0 0 16 14">
                <path d="M5.500 3.200h8.300v8H4.200V8.500" fill="none" stroke="#1b1b1b" strokeWidth="1.200" />
                <path d="M14.300 5.700h1.400v3h-1.400zM6 5h5.500v4.600H6z" fill="#1b1b1b" />
                <path d="M0 2.700h5.200v2.500c0 1-.8 1.700-1.900 1.900V10H2V7.100C.8 6.900 0 6.200 0 5.200zM1 .5h1V3H1zM3.200.5h1V3h-1z" fill="#1b1b1b" />
              </Glyph>
            </TrayIcon>
          </TrayIcons>
          <Clock>
            <Label $track={-1}>11:06</Label>
            <Label $track={-0.26}>31-03-2024</Label>
          </Clock>
          <Glyph width="14" height="15" viewBox="0 0 14 15" fill="none" stroke="#3b3d38" strokeWidth="1.100">
            <path d="M7.500.800c3.300.7 5.500 3.300 5.500 6.600a6.600 6.600 0 0 1-6.600 6.600C4 14 2 12.900.800 11c4.600-.4 8.400-4.200 6.700-10.200z" />
          </Glyph>
        </Tray>
      </Taskbar>
    </Screen>
  );
}
